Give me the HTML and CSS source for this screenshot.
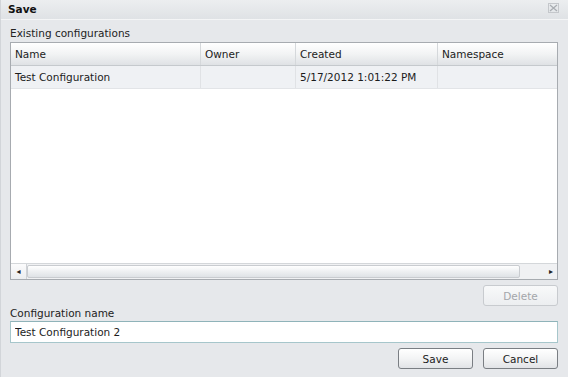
FILE: index.html
```html
<!DOCTYPE html>
<html lang="en">
<head>
    <meta charset="UTF-8">
    <title>Save</title>
    <link rel="stylesheet" href="styles.css">
</head>
<body>
    <div class="dialog">
        <div class="title-bar">
            <span class="title">Save</span>
            <svg class="close-icon" width="11" height="10" viewBox="0 0 11 10">
                <rect x="0.5" y="0.5" width="10" height="9" fill="none" stroke="#c4c7cb"/>
                <path d="M2 2 L9 8 M9 2 L2 8" stroke="#a9adb2" stroke-width="1.3"/>
            </svg>
        </div>
        <div class="content">
            <div class="field-label">Existing configurations</div>
            <div class="grid">
                <div class="grid-header">
                    <div class="cell col-name">Name</div>
                    <div class="cell col-owner">Owner</div>
                    <div class="cell col-created">Created</div>
                    <div class="cell col-ns">Namespace</div>
                </div>
                <div class="grid-row selected">
                    <div class="cell col-name">Test Configuration</div>
                    <div class="cell col-owner"></div>
                    <div class="cell col-created">5/17/2012 1:01:22 PM</div>
                    <div class="cell col-ns"></div>
                </div>
                <div class="grid-body"></div>
                <div class="scrollbar">
                    <div class="scroll-btn left">&#9666;</div>
                    <div class="scroll-thumb"></div>
                    <div class="scroll-btn right">&#9656;</div>
                </div>
            </div>
            <div class="button-row delete-row">
                <button class="btn" disabled>Delete</button>
            </div>
            <label class="field-label tight" for="config-name">Configuration name</label>
            <input class="text-input" type="text" id="config-name" value="Test Configuration 2">
            <div class="button-row">
                <button class="btn">Save</button>
                <button class="btn">Cancel</button>
            </div>
        </div>
    </div>
</body>
</html>
```

FILE: styles.css
```css
* {
    box-sizing: border-box;
}

body {
    margin: 0;
    padding: 0;
    font-family: "DejaVu Sans", Verdana, sans-serif;
    font-size: 10.5px;
    color: #1c1c1c;
    background-color: #e6e8eb;
}

.dialog {
    width: 568px;
    height: 377px;
    background-color: #e6e8eb;
    border-left: 1px solid #d2d5d9;
}

.title-bar {
    height: 20px;
    display: flex;
    align-items: center;
    justify-content: space-between;
    padding: 0 9px 0 7px;
    background: linear-gradient(#eceef0, #dfe2e5);
    border-bottom: 1px solid #f4f5f6;
}

.title {
    font-weight: bold;
    font-size: 10.5px;
    color: #111111;
    margin-top: -2px;
}

.close-icon {
    margin-top: -4px;
}

.content {
    display: flex;
    flex-direction: column;
    padding: 0 10px 0 9px;
}

.field-label {
    display: block;
    height: 22px;
    line-height: 14px;
    padding-top: 6px;
    color: #222222;
}

.field-label.tight {
    height: 15px;
    padding-top: 0;
}

.grid {
    height: 238px;
    display: flex;
    flex-direction: column;
    background-color: #ffffff;
    border: 1px solid #a7abb0;
}

.grid-header,
.grid-row {
    display: flex;
    height: 23px;
}

.grid-header {
    background: linear-gradient(#ffffff, #f2f3f4 50%, #dfe2e5);
    border-bottom: 1px solid #c5c9cd;
}

.grid-row {
    height: 23px;
    border-bottom: 1px solid #e2e4e7;
}

.grid-row.selected {
    background-color: #eff1f4;
}

.cell {
    display: flex;
    align-items: center;
    padding-left: 4px;
    border-right: 1px solid #d5d8db;
    color: #1c1c1c;
}

.grid-row .cell {
    border-right-color: #e0e2e5;
}

.col-name {
    width: 190px;
}

.col-owner {
    width: 95px;
}

.col-created {
    width: 142px;
}

.col-ns {
    flex: 1;
    border-right: none;
}

.grid-body {
    flex: 1;
}

.scrollbar {
    height: 16px;
    display: flex;
    border-top: 1px solid #d4d7da;
    background-color: #f0f1f3;
}

.scroll-btn {
    display: flex;
    align-items: center;
    justify-content: center;
    font-size: 8px;
    color: #222222;
}

.scroll-btn.left {
    width: 16px;
    border-right: 1px solid #cfd2d6;
    background: linear-gradient(#fbfbfc, #eceef0);
}

.scroll-btn.right {
    width: 37px;
    justify-content: flex-end;
    padding-right: 4px;
}

.scroll-thumb {
    width: 494px;
    margin: 1px 0;
    border: 1px solid #c9ccd0;
    border-radius: 2px;
    background: linear-gradient(#ffffff, #eef0f2 50%, #dfe2e6);
}

.button-row {
    display: flex;
    justify-content: flex-end;
    gap: 10px;
    margin-top: 5px;
}

.btn {
    width: 75px;
    height: 21px;
    padding: 0;
    font-family: "DejaVu Sans", Verdana, sans-serif;
    font-size: 10.5px;
    color: #1c1c1c;
    border: 1px solid #7a7e83;
    border-radius: 3px;
    background: linear-gradient(#ffffff, #f3f4f5 50%, #e1e3e6);
}

.btn:disabled {
    color: #a3a6aa;
    border-color: #c8cbcf;
    background: linear-gradient(#f8f9fa, #eceef0);
}

.text-input {
    height: 22px;
    padding: 0 4px;
    font-family: "DejaVu Sans", Verdana, sans-serif;
    font-size: 10.5px;
    color: #1c1c1c;
    border: 1px solid #a6c6cb;
    border-top-color: #8fb3b9;
    background-color: #ffffff;
    outline: none;
}
```
